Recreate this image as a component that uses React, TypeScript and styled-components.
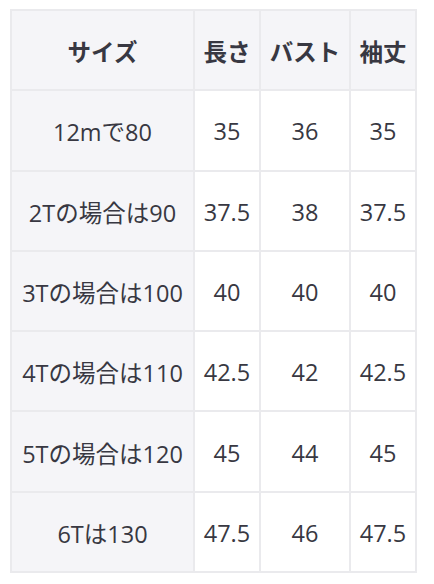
import React from "react";
import styled, { createGlobalStyle } from "styled-components";

const GlobalStyle = createGlobalStyle`
  body {
    margin: 0;
    background: #fff;
    font-family: "Open Sans", "Noto Sans CJK JP", sans-serif;
  }
`;

const SizeTable = styled.table`
  margin: 9px 0 0 10px;
  width: 406px;
  table-layout: fixed;
  border-collapse: collapse;
  color: #383842;
  font-size: 23.5px;
  th,
  td {
    height: 76.3px;
    padding: 2px 2px 0;
    border: 2px solid #eaeaed;
    text-align: center;
    vertical-align: middle;
    white-space: nowrap;
  }
  th {
    background: #f5f5f8;
    font-weight: 700;
  }
`;

const Col = styled.col<{ $w: number }>`
  width: ${(p) => p.$w}px;
`;

const Cell = styled.td<{ $label?: boolean }>`
  background: ${(p) => (p.$label ? "#f5f5f8" : "#fff")};
  font-weight: 400;
`;

const widths = [183, 66, 90, 66];
const heads = ["サイズ", "長さ", "バスト", "袖丈"];

const rows = [
  ["12mで80", "35", "36", "35"],
  ["2Tの場合は90", "37.5", "38", "37.5"],
  ["3Tの場合は100", "40", "40", "40"],
  ["4Tの場合は110", "42.5", "42", "42.5"],
  ["5Tの場合は120", "45", "44", "45"],
  ["6Tは130", "47.5", "46", "47.5"],
];

function App() {
  return (
    <>
      <GlobalStyle />
      <SizeTable>
        <colgroup>
          {widths.map((w, i) => (
            <Col key={i} $w={w} />
          ))}
        </colgroup>
        <thead>
          <tr>
            {heads.map((h) => (
              <th key={h}>{h}</th>
            ))}
          </tr>
        </thead>
        <tbody>
          {rows.map((r) => (
            <tr key={r[0]}>
              {r.map((v, i) => (
                <Cell key={i} $label={i === 0}>
                  {v}
                </Cell>
              ))}
            </tr>
          ))}
        </tbody>
      </SizeTable>
    </>
  );
}

export default App;
